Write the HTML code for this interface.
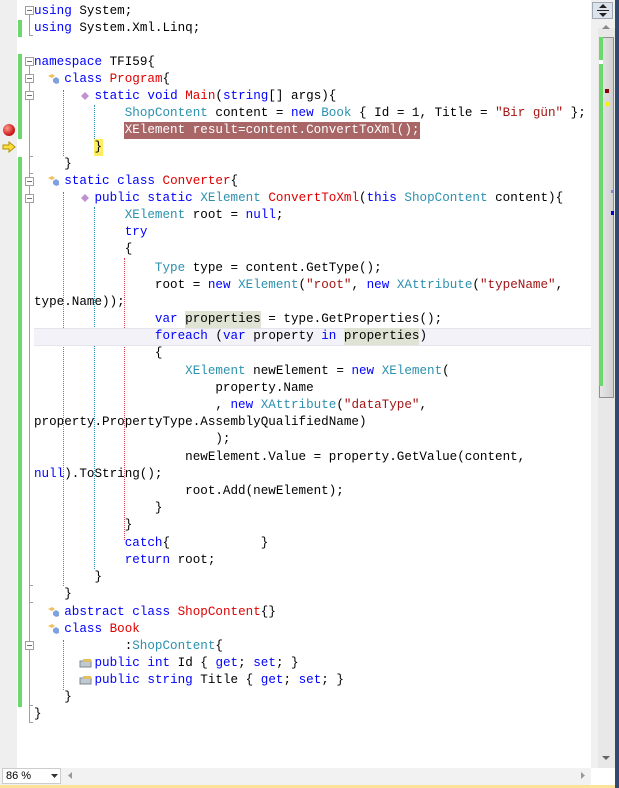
<!DOCTYPE html>
<html><head><meta charset="utf-8"><style>
body{margin:0;width:619px;height:788px;overflow:hidden;background:#fff;position:relative;font-family:"Liberation Mono",monospace;}
.l{position:absolute;left:34px;height:17px;line-height:17px;font-size:12.6px;white-space:pre;color:#000;}
.k{color:#0000ff}.t{color:#2b91af}.c{color:#e00000}.s{color:#a31515}
.abs{position:absolute}
.box{position:absolute;left:25px;width:7px;height:7px;border:1px solid #a0a0a0;background:#fff}
.box:after{content:"";position:absolute;left:1px;top:3px;width:5px;height:1px;background:#707070}
.dv{position:absolute;width:0;border-left:1px dotted #2b91af}
.ic{position:absolute;width:9px;height:7px}
</style></head><body>
<div class="abs" style="left:0;top:0;width:17px;height:768px;background:#efefef"></div>
<!-- green change bars -->
<div class="abs" style="left:18px;top:20px;width:4px;height:17px;background:#6ad96a"></div>
<div class="abs" style="left:18px;top:54px;width:4px;height:85px;background:#6ad96a"></div>
<div class="abs" style="left:18px;top:157px;width:4px;height:550px;background:#6ad96a"></div>
<!-- outline -->
<div class="abs" style="left:29px;top:12px;width:1px;height:23px;background:#a0a0a0"></div>
<div class="abs" style="left:29px;top:35px;width:4px;height:1px;background:#a0a0a0"></div>
<div class="abs" style="left:29px;top:62px;width:1px;height:660px;background:#a0a0a0"></div>
<div class="abs" style="left:29px;top:722px;width:4px;height:1px;background:#a0a0a0"></div>
<div class="box" style="top:6px"></div>
<div class="box" style="top:57px"></div>
<div class="box" style="top:74px"></div>
<div class="box" style="top:91px"></div>
<div class="box" style="top:177px"></div>
<div class="box" style="top:194px"></div>
<div class="box" style="top:641px"></div>
<div class="abs" style="left:29px;top:156px;width:4px;height:1px;background:#a0a0a0"></div>
<div class="abs" style="left:29px;top:173px;width:4px;height:1px;background:#a0a0a0"></div>
<div class="abs" style="left:29px;top:585px;width:4px;height:1px;background:#a0a0a0"></div>
<div class="abs" style="left:29px;top:602px;width:4px;height:1px;background:#a0a0a0"></div>
<div class="abs" style="left:29px;top:705px;width:4px;height:1px;background:#a0a0a0"></div>
<!-- dotted guides -->
<div class="dv" style="left:63px;top:90px;height:66px"></div>
<div class="dv" style="left:94px;top:105px;height:36px"></div>
<div class="dv" style="left:63px;top:192px;height:394px"></div>
<div class="dv" style="left:94px;top:207px;height:362px"></div>
<div class="dv" style="left:124px;top:258px;height:282px;border-left-color:#e04040"></div>
<div class="dv" style="left:63px;top:640px;height:50px"></div>
<!-- current line -->
<div class="abs" style="left:34px;top:328px;width:557px;height:16px;background:#f2f2f8;border-top:1px solid #e4e4ee;border-bottom:1px solid #e4e4ee"></div>
<div class="abs" style="left:185px;top:311px;width:76px;height:17px;background:#dfe3d3"></div>
<div class="abs" style="left:344px;top:328px;width:75px;height:17px;background:#dfe3d3"></div>
<!-- breakpoint -->
<div class="abs" style="left:124px;top:122px;width:296px;height:17px;background:#a86667"></div>
<div class="abs" style="left:3px;top:124px;width:12px;height:12px;border-radius:50%;background:radial-gradient(circle at 35% 35%,#ff9a8a,#d02020 60%,#901010)"></div>
<div class="abs" style="left:94px;top:139px;width:9px;height:17px;background:#ffee62"></div>
<svg class="abs" style="left:2px;top:141px" width="15" height="12"><path d="M1 4H7V1L13 6L7 11V8H1Z" fill="#ffe040" stroke="#b09000" stroke-width="1"/></svg>
<!-- icons -->
<svg class="abs" style="left:47px;top:73px" width="14" height="12"><path d="M1 3L5 1L8 3L5 5Z" fill="#f0c060"/><path d="M6 6L9 4L12 6L12 10L9 11L6 9Z" fill="#80a0e0"/></svg>
<svg class="abs" style="left:47px;top:175px" width="14" height="12"><path d="M1 3L5 1L8 3L5 5Z" fill="#f0c060"/><path d="M6 6L9 4L12 6L12 10L9 11L6 9Z" fill="#80a0e0"/></svg>
<svg class="abs" style="left:47px;top:606px" width="14" height="12"><path d="M1 3L5 1L8 3L5 5Z" fill="#f0c060"/><path d="M6 6L9 4L12 6L12 10L9 11L6 9Z" fill="#80a0e0"/></svg>
<svg class="abs" style="left:47px;top:623px" width="14" height="12"><path d="M1 3L5 1L8 3L5 5Z" fill="#f0c060"/><path d="M6 6L9 4L12 6L12 10L9 11L6 9Z" fill="#80a0e0"/></svg>
<svg class="abs" style="left:80px;top:90px" width="12" height="12"><path d="M5 2L9 6L5 10L1 6Z" fill="#c090d0"/></svg>
<svg class="abs" style="left:80px;top:192px" width="12" height="12"><path d="M5 2L9 6L5 10L1 6Z" fill="#c090d0"/></svg>
<svg class="abs" style="left:79px;top:657px" width="14" height="12"><rect x="1" y="4" width="11" height="6" fill="#c0c8d0" stroke="#808890"/><rect x="4" y="2" width="8" height="3" fill="#e0c060"/></svg>
<svg class="abs" style="left:79px;top:674px" width="14" height="12"><rect x="1" y="4" width="11" height="6" fill="#c0c8d0" stroke="#808890"/><rect x="4" y="2" width="8" height="3" fill="#e0c060"/></svg>

<div class="l" style="top:3px"><span class="k">using</span> System;</div>
<div class="l" style="top:20px"><span class="k">using</span> System.Xml.Linq;</div>
<div class="l" style="top:54px"><span class="k">namespace</span> TFI59{</div>
<div class="l" style="top:71px">    <span class="k">class</span> <span class="c">Program</span>{</div>
<div class="l" style="top:88px">        <span class="k">static</span> <span class="k">void</span> <span class="c">Main</span>(<span class="k">string</span>[] args){</div>
<div class="l" style="top:105px">            <span class="t">ShopContent</span> content = <span class="k">new</span> <span class="t">Book</span> { Id = 1, Title = <span class="s">"Bir gün"</span> };</div>
<div class="l" style="top:122px;color:#fff">            XElement result=content.ConvertToXml();</div>
<div class="l" style="top:139px">        }</div>
<div class="l" style="top:156px">    }</div>
<div class="l" style="top:173px">    <span class="k">static</span> <span class="k">class</span> <span class="c">Converter</span>{</div>
<div class="l" style="top:190px">        <span class="k">public</span> <span class="k">static</span> <span class="t">XElement</span> <span class="c">ConvertToXml</span>(<span class="k">this</span> <span class="t">ShopContent</span> content){</div>
<div class="l" style="top:207px">            <span class="t">XElement</span> root = <span class="k">null</span>;</div>
<div class="l" style="top:224px">            <span class="k">try</span></div>
<div class="l" style="top:241px">            {</div>
<div class="l" style="top:260px">                <span class="t">Type</span> type = content.GetType();</div>
<div class="l" style="top:277px">                root = <span class="k">new</span> <span class="t">XElement</span>(<span class="s">"root"</span>, <span class="k">new</span> <span class="t">XAttribute</span>(<span class="s">"typeName"</span>,</div>
<div class="l" style="top:294px">type.Name));</div>
<div class="l" style="top:311px">                <span class="k">var</span> properties = type.GetProperties();</div>
<div class="l" style="top:328px">                <span class="k">foreach</span> (<span class="k">var</span> property <span class="k">in</span> properties)</div>
<div class="l" style="top:345px">                {</div>
<div class="l" style="top:363px">                    <span class="t">XElement</span> newElement = <span class="k">new</span> <span class="t">XElement</span>(</div>
<div class="l" style="top:380px">                        property.Name</div>
<div class="l" style="top:397px">                        , <span class="k">new</span> <span class="t">XAttribute</span>(<span class="s">"dataType"</span>,</div>
<div class="l" style="top:414px">property.PropertyType.AssemblyQualifiedName)</div>
<div class="l" style="top:431px">                        );</div>
<div class="l" style="top:449px">                    newElement.Value = property.GetValue(content,</div>
<div class="l" style="top:466px"><span class="k">null</span>).ToString();</div>
<div class="l" style="top:483px">                    root.Add(newElement);</div>
<div class="l" style="top:500px">                }</div>
<div class="l" style="top:517px">            }</div>
<div class="l" style="top:535px">            <span class="k">catch</span>{            }</div>
<div class="l" style="top:552px">            <span class="k">return</span> root;</div>
<div class="l" style="top:569px">        }</div>
<div class="l" style="top:586px">    }</div>
<div class="l" style="top:604px">    <span class="k">abstract</span> <span class="k">class</span> <span class="c">ShopContent</span>{}</div>
<div class="l" style="top:621px">    <span class="k">class</span> <span class="c">Book</span></div>
<div class="l" style="top:638px">            :<span class="t">ShopContent</span>{</div>
<div class="l" style="top:655px">        <span class="k">public</span> <span class="k">int</span> Id { <span class="k">get</span>; <span class="k">set</span>; }</div>
<div class="l" style="top:672px">        <span class="k">public</span> <span class="k">string</span> Title { <span class="k">get</span>; <span class="k">set</span>; }</div>
<div class="l" style="top:689px">    }</div>
<div class="l" style="top:706px">}</div>

<!-- scrollbar -->
<div class="abs" style="left:591px;top:0;width:24px;height:768px;background:#f0f0f0"></div>
<div class="abs" style="left:598px;top:28px;width:17px;height:740px;background:#e8e8e8"></div>
<div class="abs" style="left:592px;top:2px;width:21px;height:17px;background:#dde3ea;border:1px solid #a0a8b4;box-sizing:border-box"></div>
<svg class="abs" style="left:594px;top:3px" width="18" height="15"><path d="M9 1L5 5H13Z M9 14L5 10H13Z" fill="#222"/><rect x="3" y="7" width="12" height="1" fill="#222"/></svg>
<svg class="abs" style="left:601px;top:23px" width="10" height="8"><path d="M1 6H9L5 2Z" fill="#888"/></svg>
<div class="abs" style="left:599px;top:37px;width:15px;height:361px;background:linear-gradient(90deg,#e6e6e6,#d0d0d0);border:1px solid #909090;box-sizing:border-box"></div>
<div class="abs" style="left:599px;top:37px;width:4px;height:349px;background:#6ad96a"></div>
<div class="abs" style="left:599px;top:60px;width:4px;height:4px;background:#fff"></div>
<div class="abs" style="left:605px;top:89px;width:4px;height:4px;background:#8b0000"></div>
<div class="abs" style="left:605px;top:102px;width:4px;height:4px;background:#ffee00"></div>
<div class="abs" style="left:611px;top:190px;width:3px;height:3px;background:#8080e0"></div>
<div class="abs" style="left:611px;top:211px;width:3px;height:4px;background:#0000d0"></div>
<svg class="abs" style="left:601px;top:754px" width="10" height="8"><path d="M1 2H9L5 6Z" fill="#666"/></svg>
<div class="abs" style="left:615px;top:0;width:4px;height:788px;background:#2e4a6f"></div>
<!-- bottom bar -->
<div class="abs" style="left:0;top:768px;width:591px;height:17px;background:#f2f2f2"></div>
<div class="abs" style="left:2px;top:768px;width:59px;height:16px;background:#fff;border:1px solid #ccc;box-sizing:border-box;font-family:'Liberation Sans',sans-serif;font-size:11px;line-height:15px;padding-left:3px">86 %</div>
<svg class="abs" style="left:51px;top:773px" width="8" height="6"><path d="M0 1H7L3.5 5Z" fill="#333"/></svg>
<svg class="abs" style="left:67px;top:771px" width="6" height="10"><path d="M5 1V8L1 4.5Z" fill="#999"/></svg>
<svg class="abs" style="left:580px;top:771px" width="6" height="10"><path d="M1 1V8L5 4.5Z" fill="#999"/></svg>
<div class="abs" style="left:591px;top:768px;width:24px;height:17px;background:#fff"></div>
<div class="abs" style="left:0;top:785px;width:615px;height:3px;background:#fce29b"></div>
</body></html>
